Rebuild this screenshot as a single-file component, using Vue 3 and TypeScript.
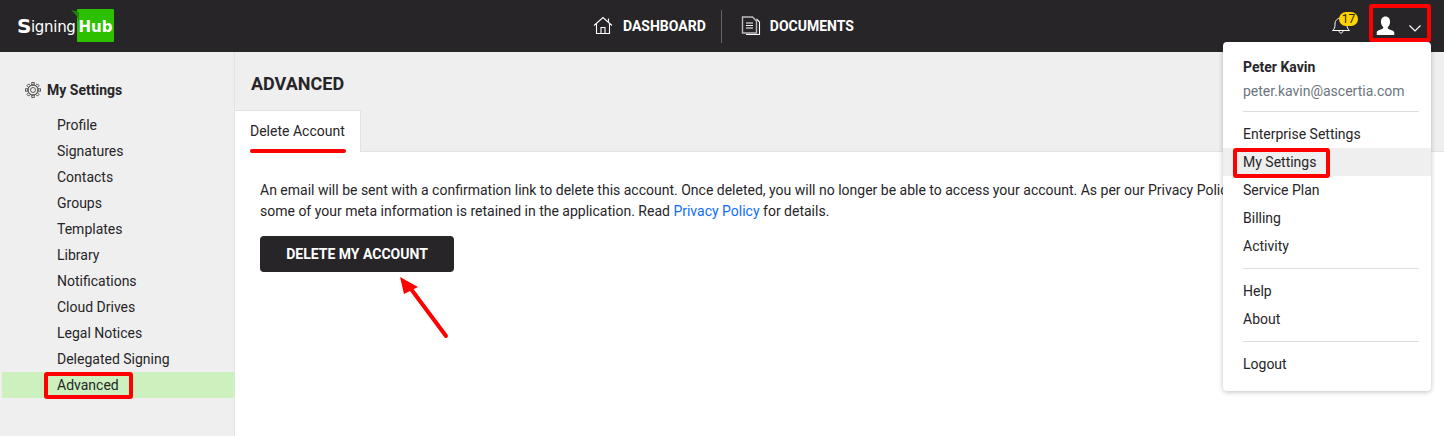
<script setup lang="ts">
const items: string[] = ['Profile','Signatures','Contacts','Groups','Templates','Library','Notifications','Cloud Drives','Legal Notices','Delegated Signing','Advanced']
const group1: string[] = ['Enterprise Settings','My Settings','Service Plan','Billing','Activity']
const gearTeeth: number[] = [0,45,90,135,180,225,270,315]
</script>

<template>
  <div class="page">
    <header class="top">
      <div class="logo">
        <span class="logo-s">S</span><span class="logo-rest">igning</span>
        <svg class="swoosh" width="8" height="12" viewBox="0 0 8 12"><path d="M0 0 8 2V12C7 7 4 3 0 0z" fill="#1f8a05"/></svg>
        <span class="logo-hub">Hub</span>
      </div>
      <nav class="nav">
        <a class="nav-item">
          <svg width="20" height="20" viewBox="0 0 20 20" fill="none" stroke="#fff" stroke-width="1.1">
            <path d="M1 9.500 10 1.500 19 9.500M3.500 8v9.500h13V8M8 17.500v-6h4v6M15.500 5.500V2.500"/>
          </svg>
          <span>DASHBOARD</span>
        </a>
        <span class="nav-sep"></span>
        <a class="nav-item docs">
          <svg width="20" height="20" viewBox="0 0 20 20" fill="none" stroke="#fff" stroke-width="1.1">
            <path d="M5 18.500h13.500V6L15.500 3" />
            <path d="M1.500 1h10l4 4v12h-14z" stroke="#bbb" stroke-width="1.400"/>
            <path d="M5 7h7M5 9.500h7M5 12h7" stroke-width="1"/>
          </svg>
          <span>DOCUMENTS</span>
        </a>
      </nav>
      <div class="right">
        <div class="bell">
          <svg width="20" height="20" viewBox="0 0 20 20" fill="none" stroke="#fff" stroke-width="1">
            <path d="M1.500 15.500c2-1.500 2.500-3 2.500-6.500 0-3.500 2.500-6 6-6s6 2.500 6 6c0 3.500.5 5 2.500 6.500zM8 15.500c0 1.600.8 2.500 2 2.500s2-.9 2-2.500"/>
          </svg>
          <span class="badge">17</span>
        </div>
        <div class="user">
          <svg width="19" height="20" viewBox="0 0 20 20" fill="#fff">
            <path d="M10 0c3 0 4.800 2.300 4.800 5.400 0 2.500-1 4.600-2.400 5.800-.2 1 .2 1.700 1.400 2.200 2.400 1 4.900 1.700 5.400 3.200V19.500H.8V16.400c.5-1.500 3-2.200 5.400-3.200 1.200-.5 1.600-1.200 1.400-2.200C6.200 9.800 5.200 7.900 5.200 5.400 5.200 2.300 7 0 10 0z"/>
          </svg>
          <svg class="chev" width="12" height="7" viewBox="0 0 12 7" fill="none" stroke="#fff" stroke-width="1.200">
            <path d="M.5.500 6 6 11.500.500"/>
          </svg>
        </div>
      </div>
    </header>

    <div class="body">
      <aside class="side">
        <div class="side-title">
          <svg width="16" height="16" viewBox="0 0 16 16" fill="none" stroke="#333" stroke-width=".8">
            <circle cx="8" cy="8" r="2.500"/>
            <circle cx="8" cy="8" r="5"/>
            <rect v-for="a in gearTeeth" :key="a" x="6.800" y="0.600" width="2.400" height="2.400" :transform="`rotate(${a} 8 8)`"/>
          </svg>
          <span>My Settings</span>
        </div>
        <ul class="side-list">
          <li v-for="i in items" :key="i" :class="{ on: i === 'Advanced' }">{{ i }}</li>
        </ul>
      </aside>

      <main class="main">
        <div class="head">
          <h1>ADVANCED</h1>
          <div class="tabs"><div class="tab">Delete Account</div></div>
        </div>
        <div class="content">
          <p>An email will be sent with a confirmation link to delete this account. Once deleted, you will no longer be able to access your account. As per our Privacy Policy,<br>some of your meta information is retained in the application. Read <a class="link">Privacy Policy</a> for details.</p>
          <button class="btn">DELETE MY ACCOUNT</button>
        </div>
      </main>
    </div>

    <div class="menu">
      <div class="who">
        <strong>Peter Kavin</strong>
        <span>peter.kavin@ascertia.com</span>
      </div>
      <div class="group">
        <div v-for="g in group1" :key="g" class="mi" :class="{ hi: g === 'My Settings' }">{{ g }}</div>
      </div>
      <div class="group">
        <div class="mi">Help</div>
        <div class="mi">About</div>
      </div>
      <div class="group last">
        <div class="mi">Logout</div>
      </div>
    </div>

    <i class="mark m-user"></i>
    <i class="mark m-set"></i>
    <i class="mark m-adv"></i>
    <i class="underline"></i>
    <svg class="arrow" width="60" height="72" viewBox="0 0 60 72">
      <path d="M47 60 12 13" stroke="#f00" stroke-width="4" stroke-linecap="round"/>
      <path d="M1 1 19 11 5 18z" fill="#f00"/>
    </svg>
  </div>
</template>

<style scoped>
.page { position: relative; width: 1444px; height: 436px; overflow: hidden; background: #fff; font-family: Roboto, "Liberation Sans", sans-serif; font-size: 14px; color: #272528; }
.top { height: 52px; background: #272528; display: flex; align-items: center; position: relative; }
.logo { position: absolute; left: 17px; top: 9px; height: 33px; display: flex; align-items: center; color: #fff; font-family: "DejaVu Sans", sans-serif; font-weight: 700; }
.logo-s { font-size: 20px; width: 14px; }
.logo-rest { font-size: 15px; font-weight: 400; letter-spacing: -.3px; margin-top: 3px; width: 46px; }
.swoosh { position: absolute; left: 54px; top: 1px; }
.logo-hub { width: 37px; height: 33px; background: #2cc000; border-radius: 1px; font-size: 15px; display: flex; align-items: center; justify-content: center; padding-top: 2px; box-sizing: border-box; }
.nav { margin-left: 593px; display: flex; align-items: center; color: #fff; font-weight: 700; font-size: 14px; }
.nav-item { display: flex; align-items: center; gap: 10px; }
.docs { gap: 9px; }
.nav-sep { width: 1px; height: 33px; background: #666; margin: 0 19px 0 15px; }
.right { position: absolute; right: 0; top: 0; height: 52px; }
.bell { position: absolute; right: 93px; top: 15px; width: 20px; height: 20px; }
.badge { position: absolute; left: 8px; top: -3px; width: 19px; height: 14px; border-radius: 7px; background: #ffd400; color: #272528; font-size: 12px; line-height: 14px; text-align: center; }
.user { position: absolute; right: 23px; top: 16px; width: 45px; display: flex; align-items: center; justify-content: space-between; }
.chev { margin-top: 4px; }
.body { display: flex; height: 384px; }
.side { width: 232px; margin-left: 0; background: #efefef; border-right: 1px solid #e2e2e2; padding: 28px 0 0 2px; }
.side-title { display: flex; align-items: center; gap: 6px; margin-left: 23px; height: 20px; font-weight: 700; font-size: 14px; }
.side-list { list-style: none; margin: 12px 0 0; padding: 0; }
.side-list li { height: 26px; line-height: 26px; padding-left: 55px; }
.side-list li.on { background: #ccf1bf; }
.main { flex: 1; min-width: 0; }
.head { background: #efefef; height: 100px; box-sizing: border-box; padding-top: 21px; border-bottom: 1px solid #e2e2e2; position: relative; }
.head h1 { margin: 0 0 0 16px; font-size: 18px; line-height: 22px; font-weight: 700; color: #272528; }
.tabs { position: absolute; left: 0; top: 58px; }
.tab { width: 126px; height: 42px; box-sizing: border-box; background: #fff; border: 1px solid #e2e2e2; border-left: 0; border-bottom: 0; line-height: 41px; padding-left: 15px; }
.content { padding: 28px 0 0 25px; }
.content p { margin: 0; line-height: 21px; white-space: nowrap; color: #272528; }
.link { color: #0d6efd; }
.btn { display: block; margin-top: 14px; width: 194px; height: 36px; border: 0; border-radius: 4px; background: #272528; color: #fff; font: 700 14px Roboto, "Liberation Sans", sans-serif; }
.menu { position: absolute; left: 1223px; top: 42px; width: 208px; height: 349px; box-sizing: border-box; background: #fff; border-radius: 4px; box-shadow: 0 1px 5px rgba(0,0,0,.25); padding-top: 13px; }
.who { display: flex; flex-direction: column; margin: 0 12px 0 20px; padding-bottom: 9px; border-bottom: 1px solid #ddd; height: 47px; }
.who strong { line-height: 24px; font-weight: 700; }
.who span { line-height: 24px; color: #6c757d; }
.group { margin-top: 8px; padding-bottom: 9px; position: relative; }
.group::after { content: ""; position: absolute; left: 20px; right: 12px; bottom: 0; border-bottom: 1px solid #ddd; }
.group.last::after { display: none; }
.mi { height: 28px; line-height: 28px; padding-left: 20px; }
.mi.hi { background: #efefef; }
.mark { position: absolute; border: 4px solid #f00; border-radius: 3px; box-sizing: border-box; }
.m-user { left: 1369px; top: 4px; width: 62px; height: 38px; }
.m-set { left: 1233px; top: 148px; width: 97px; height: 30px; }
.m-adv { left: 44px; top: 372px; width: 89px; height: 27px; }
.underline { position: absolute; left: 250px; top: 149px; width: 96px; height: 4px; background: #f00; border-radius: 2px; }
.arrow { position: absolute; left: 399px; top: 276px; }
</style>
